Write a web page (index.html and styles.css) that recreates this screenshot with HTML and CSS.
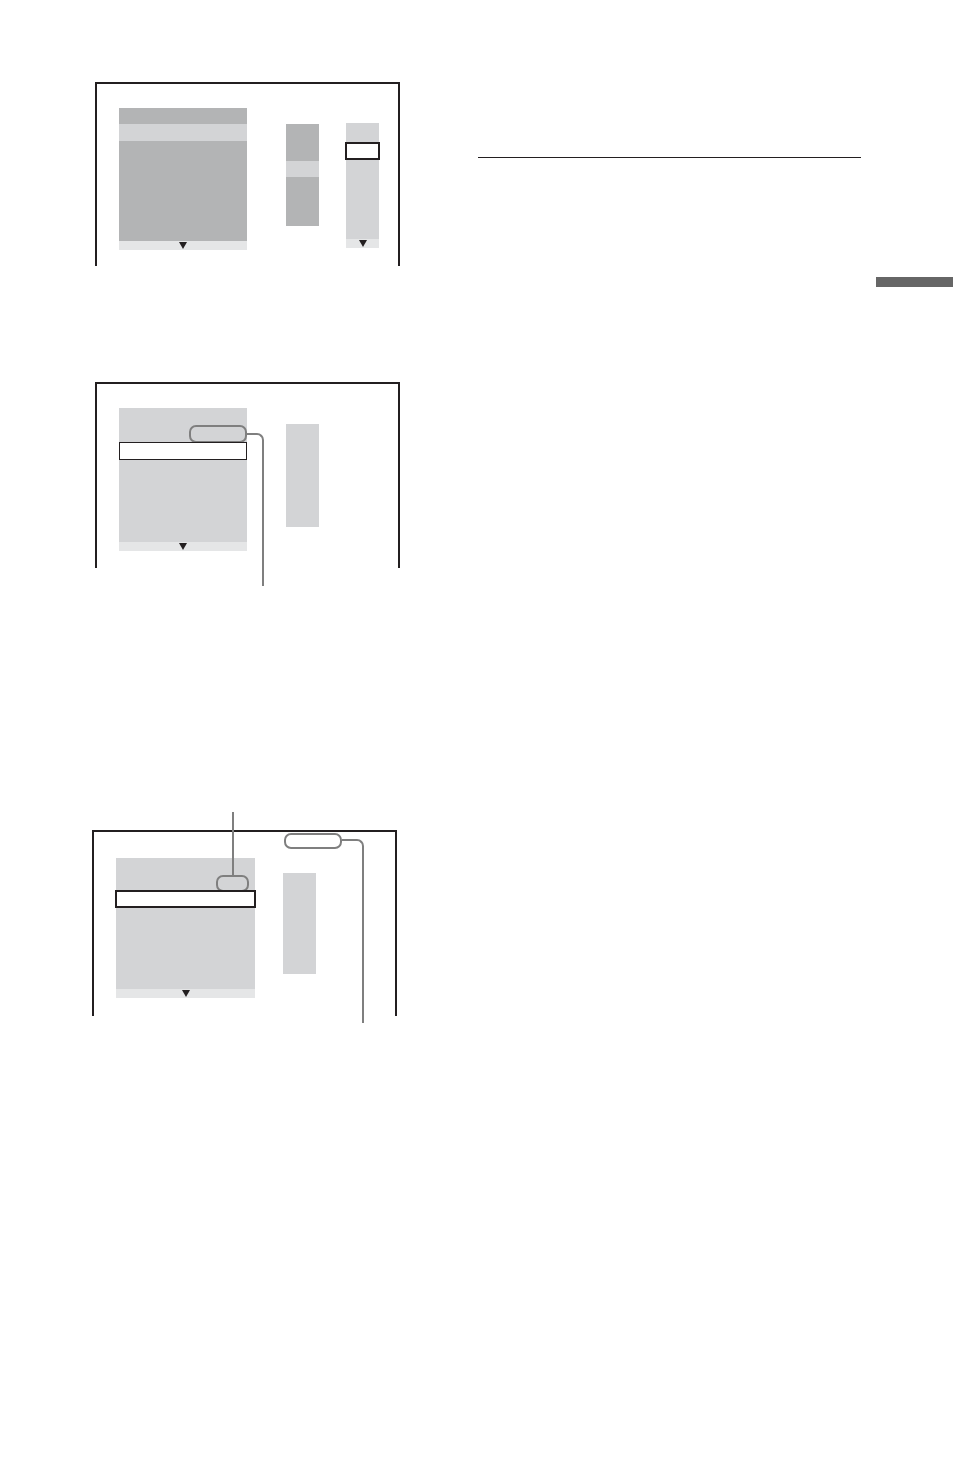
FILE: index.html
```html
<!DOCTYPE html>
<html lang="en">
<head>
  <meta charset="UTF-8">
  <title>Setup display</title>
  <link rel="stylesheet" href="styles.css">
</head>
<body>
  <div class="page">
    <div class="figures">

      <!-- figure 1: list with two sub columns -->
      <div class="screen screen-one">
        <div class="panel panel-narrow">
          <div class="band dark h16"></div>
          <div class="band light h17"></div>
          <div class="band dark grow"></div>
          <div class="panel-foot"><span class="arrow"></span></div>
        </div>
        <div class="column column-mid">
          <div class="band dark h37"></div>
          <div class="band light h16"></div>
          <div class="band dark h49"></div>
        </div>
        <div class="column column-right">
          <div class="column-body">
            <div class="value-box"></div>
          </div>
          <div class="panel-foot"><span class="arrow"></span></div>
        </div>
      </div>

      <!-- figure 2: selected row with callout -->
      <div class="screen screen-two">
        <div class="panel panel-narrow panel-light">
          <div class="panel-body">
            <div class="pill pill-wide"></div>
            <div class="row-selected"></div>
          </div>
          <div class="panel-foot"><span class="arrow"></span></div>
        </div>
        <div class="column column-plain h103"></div>
        <div class="callout callout-two"></div>
      </div>

      <!-- figure 3: two callouts -->
      <div class="screen screen-three">
        <div class="panel panel-wide panel-light">
          <div class="panel-body">
            <div class="pill pill-small"></div>
            <div class="row-selected row-bold"></div>
          </div>
          <div class="panel-foot"><span class="arrow"></span></div>
        </div>
        <div class="column column-plain h101"></div>
        <div class="pill pill-top"></div>
        <div class="lead lead-three"></div>
        <div class="callout callout-three"></div>
      </div>

    </div>

    <div class="text-col">
      <hr class="rule">
    </div>

    <div class="tab-col">
      <div class="thumb-tab"></div>
    </div>
  </div>
</body>
</html>
```

FILE: styles.css
```css
* {
  box-sizing: border-box;
}
body {
  margin: 0;
  background: #ffffff;
  font-family: 'Liberation Sans', Arial, sans-serif;
}
.page {
  display: grid;
  grid-template-columns: 478px 383px 1fr;
  width: 954px;
  height: 1482px;
}

/* screens */
.screen {
  position: relative;
  display: flex;
  align-items: flex-start;
  width: 305px;
  border: 2px solid #231f20;
  border-bottom: none;
  padding: 24px 0 0 22px;
}
.screen-one {
  margin: 82px 0 0 95px;
  height: 184px;
}
.screen-two {
  margin: 116px 0 0 95px;
  height: 186px;
}
.screen-three {
  margin: 262px 0 0 92px;
  height: 186px;
  padding-top: 26px;
}

/* grey blocks */
.dark { background: #b3b4b5; }
.light { background: #d3d4d6; }
.h16 { height: 16px; }
.h17 { height: 17px; }
.h37 { height: 37px; }
.h49 { height: 49px; }
.h101 { height: 101px; }
.h103 { height: 103px; }
.grow { flex: 1; }

.panel {
  display: flex;
  flex-direction: column;
}
.panel-narrow {
  width: 128px;
  height: 142px;
}
.screen-two .panel-narrow {
  height: 143px;
}
.panel-wide {
  width: 139px;
  height: 140px;
}
.panel-light {
  background: #d3d4d6;
}
.panel-body {
  flex: 1;
  display: flex;
  flex-direction: column;
  padding-top: 17px;
}
.panel-foot {
  height: 9px;
  background: #e5e6e7;
  display: flex;
  justify-content: center;
  align-items: center;
}
.arrow {
  width: 0;
  height: 0;
  border-left: 4px solid transparent;
  border-right: 4px solid transparent;
  border-top: 7px solid #231f20;
}

.column {
  width: 33px;
}
.column-mid {
  margin: 16px 0 0 39px;
}
.column-right {
  margin: 15px 0 0 27px;
  display: flex;
  flex-direction: column;
}
.column-body {
  height: 116px;
  background: #d3d4d6;
  padding-top: 19px;
}
.value-box {
  height: 18px;
  margin: 0 -1px 0 -1px;
  background: #ffffff;
  border: 2px solid #231f20;
}
.column-plain {
  background: #d3d4d6;
  margin: 16px 0 0 39px;
}
.screen-three .column-plain {
  margin: 15px 0 0 28px;
}

/* selected rows and pills */
.row-selected {
  height: 18px;
  background: #ffffff;
  border: 1px solid #231f20;
}
.row-bold {
  border-width: 2px;
  margin: -1px -1px 0 -1px;
}
.pill {
  border: 2px solid #7f7f7f;
  border-radius: 7px;
}
.pill-wide {
  align-self: flex-end;
  width: 58px;
  height: 18px;
  margin-bottom: -1px;
}
.pill-small {
  align-self: flex-end;
  width: 33px;
  height: 17px;
  margin-right: 6px;
  margin-bottom: -1px;
}
.pill-top {
  position: absolute;
  left: 190px;
  top: 1px;
  width: 58px;
  height: 16px;
  background: #ffffff;
}

/* callout leaders */
.callout {
  position: absolute;
  border-top: 2px solid #7f7f7f;
  border-right: 2px solid #7f7f7f;
  border-top-right-radius: 7px;
}
.callout-two {
  left: 150px;
  top: 49px;
  width: 17px;
  height: 153px;
}
.callout-three {
  left: 248px;
  top: 7px;
  width: 22px;
  height: 184px;
}
.lead {
  position: absolute;
  width: 2px;
  background: #7f7f7f;
}
.lead-three {
  left: 138px;
  top: -20px;
  height: 63px;
}

/* right side */
.rule {
  margin: 157px 0 0 0;
  border: none;
  border-top: 1px solid #231f20;
  height: 0;
}
.thumb-tab {
  margin: 277px 0 0 15px;
  width: 77px;
  height: 10px;
  background: #666666;
}
```
